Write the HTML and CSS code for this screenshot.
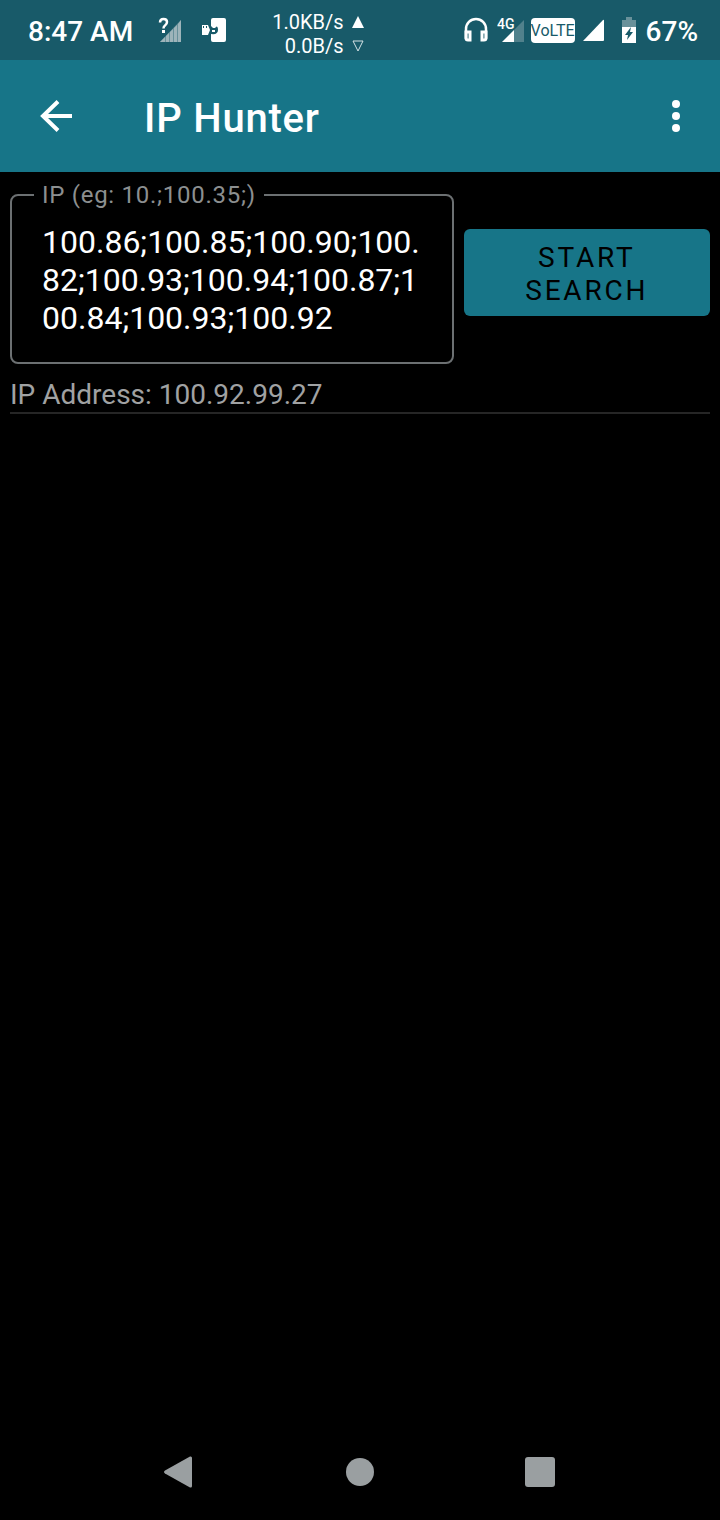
FILE: index.html
```html
<!DOCTYPE html>
<html lang="en">
<head>
    <meta charset="UTF-8">
    <meta name="viewport" content="width=device-width, initial-scale=1.0">
    <title>IP Hunter</title>
    <link rel="stylesheet" href="styles.css">
</head>
<body>
    <!-- Status bar -->
    <div class="status-bar">
        <span class="status-text">8:47 AM</span>
        <svg class="no-sim" width="24" height="28" viewBox="0 0 24 28" aria-hidden="true">
            <path d="M2 26L7 21V26Z M8 20L11 17V26H8Z M12 16L15 13V26H12Z M16 12L19 9V26H16Z M20 8L23 4V26H20Z" fill="#9db4ba"/>
            <path d="M2 26L23 4V26Z" fill="#9db4ba" opacity="0.6"/>
            <path d="M2 6.500Q2 3 5.500 3Q9 3 9 6Q9 8 7 9.500Q5.500 10.500 5.500 12.500" fill="none" stroke="#fff" stroke-width="2.500"/>
            <rect x="4" y="14" width="3" height="3" fill="#fff"/>
        </svg>
        <svg class="app-icon" width="24" height="24" viewBox="0 0 24 24" aria-hidden="true">
            <path d="M11 0H22Q24 0 24 2V22Q24 24 22 24H11Q9 24 9 22V16Q16 17 16 12Q16 8.500 14.500 8.500L13 10H11L9 8V2Q9 0 11 0Z" fill="#fff"/>
            <path d="M0 7H6L8 12L6 17H0Z" fill="#fff"/>
            <path d="M1 9H2M4 9H5" stroke="#185a69" stroke-width="2"/>
            <path d="M10 13H13" stroke="#fff" stroke-width="2"/>
        </svg>
        <div class="speed">
            <span>1.0KB/s</span>
            <svg width="12" height="12" viewBox="0 0 12 12" aria-hidden="true"><path d="M6 0L12 12H0Z" fill="#fff"/></svg>
            <span>0.0B/s</span>
            <svg width="12" height="12" viewBox="0 0 12 12" aria-hidden="true"><path d="M1 1H11L6 11Z" fill="none" stroke="#d5e2e5"/></svg>
        </div>
        <div class="status-right">
            <svg width="24" height="26" viewBox="0 0 24 26" aria-hidden="true">
                <path d="M2 22V12A10 10 0 0 1 22 12V22" fill="none" stroke="#fff" stroke-width="2.500"/>
                <path d="M2 15H6V23H4Q2 23 2 21ZM18 15H22V21Q22 23 20 23H18Z" fill="none" stroke="#fff" stroke-width="3"/>
            </svg>
            <svg class="mobile-data" width="28" height="28" viewBox="0 0 28 28" role="img" aria-label="4G signal">
                <path d="M17 26V14L27 4V26Z" fill="#51818c"/>
                <path d="M5 26L17 14V26Z" fill="#fff"/>
                <text class="network-type" x="0" y="13">4G</text>
            </svg>
            <span class="volte">VoLTE</span>
            <svg class="signal" width="22" height="24" viewBox="0 0 22 24" aria-hidden="true"><path d="M1 23L21 2Q22 1 22 3V22Q22 23 21 23Z" fill="#fff"/></svg>
            <svg class="battery" width="14" height="26" viewBox="0 0 14 26" aria-hidden="true">
                <path d="M4 0H10V3H14V10H0V3H4Z" fill="#69919a"/>
                <path d="M0 10H14V26H0Z" fill="#fff"/>
                <path d="M9 10L3 18H6L5 23L11 15H8Z" fill="#185a69"/>
            </svg>
            <span class="status-text">67%</span>
        </div>
    </div>

    <!-- App bar -->
    <header class="app-bar">
        <button class="icon-btn" aria-label="Back">
            <svg width="32" height="32" viewBox="0 0 32 32"><path d="M18 1.500L3 16L18 30.500M3 16H32" fill="none" stroke="#fff" stroke-width="4"/></svg>
        </button>
        <h1>IP Hunter</h1>
        <button class="icon-btn more-btn" aria-label="More options">
            <svg width="8" height="32" viewBox="0 0 8 32" fill="#fff"><circle cx="4" cy="4" r="4"/><circle cx="4" cy="16" r="4"/><circle cx="4" cy="28" r="4"/></svg>
        </button>
    </header>

    <main>
        <form class="search-form">
            <fieldset class="ip-field">
                <legend><label for="ip-list">IP (eg: 10.;100.35;)</label></legend>
                <textarea id="ip-list" rows="3" spellcheck="false">100.86;100.85;100.90;100.82;100.93;100.94;100.87;100.84;100.93;100.92</textarea>
            </fieldset>
            <button type="button" class="start-btn">START SEARCH</button>
        </form>
        <p class="ip-address">IP Address: 100.92.99.27</p>
    </main>

    <!-- Navigation buttons -->
    <nav class="nav-bar">
        <button class="icon-btn" aria-label="Back">
            <svg width="32" height="32" viewBox="0 0 32 32"><path d="M1 14.500L26 0.500Q28 0 28 2V30Q28 32 26 31.500L1 17.500Q-1 16 1 14.500Z" fill="#9a9fa1"/></svg>
        </button>
        <button class="icon-btn" aria-label="Home">
            <svg width="28" height="28" viewBox="0 0 28 28"><circle cx="14" cy="14" r="14" fill="#9a9fa1"/></svg>
        </button>
        <button class="icon-btn" aria-label="Recent apps">
            <svg width="30" height="30" viewBox="0 0 30 30"><rect width="30" height="30" rx="3" fill="#9a9fa1"/></svg>
        </button>
    </nav>
</body>
</html>
```
FILE: styles.css
```css
* {
    box-sizing: border-box;
}

body {
    margin: 0;
    min-height: 100vh;
    display: flex;
    flex-direction: column;
    background-color: #000;
    color: #fff;
    font-family: Roboto, sans-serif;
}

svg {
    display: block;
    flex-shrink: 0;
}

button {
    font-family: inherit;
    border: none;
    cursor: pointer;
}

/* Status bar */
.status-bar {
    display: flex;
    align-items: center;
    height: 60px;
    padding: 0 22px 0 28px;
    background-color: #185a69;
}

.status-text {
    font-size: 28px;
    font-weight: 500;
    line-height: 32px;
    padding-top: 4px;
}

.no-sim {
    margin-left: 25px;
}

.app-icon {
    margin-left: 20px;
}

.speed {
    display: grid;
    grid-template-columns: auto 12px;
    column-gap: 9px;
    align-items: center;
    justify-items: end;
    margin-left: 46px;
    padding-top: 8px;
    font-size: 20px;
    line-height: 24px;
}

.status-right {
    display: flex;
    align-items: center;
    margin-left: auto;
}

.mobile-data {
    margin-left: 9px;
}

.network-type {
    fill: #fff;
    font-size: 14px;
    font-weight: 500;
}

.volte {
    margin-left: 6px;
    width: 44px;
    border-radius: 4px;
    background-color: #fff;
    color: #185a69;
    font-size: 16px;
    line-height: 25px;
    text-align: center;
}

.signal {
    margin-left: 7px;
}

.battery {
    margin: 0 10px 0 18px;
}

/* App bar */
.app-bar {
    display: flex;
    align-items: center;
    height: 112px;
    padding: 0 16px;
    background-color: #177588;
}

.icon-btn {
    display: flex;
    align-items: center;
    justify-content: center;
    height: 80px;
    min-width: 56px;
    padding: 0;
    background: none;
}

.app-bar .icon-btn {
    width: 80px;
}

.app-bar .more-btn {
    width: 56px;
    margin-left: auto;
}

h1 {
    margin: 0 0 0 48px;
    padding-top: 6px;
    font-size: 40px;
    font-weight: 500;
    letter-spacing: 0.02em;
    line-height: 48px;
}

/* Search form */
main {
    flex: 1;
    padding: 9px 10px;
}

.search-form {
    display: grid;
    grid-template-columns: 9fr 5fr;
    column-gap: 10px;
    align-items: center;
}

.ip-field {
    min-width: 0;
    margin: 0;
    padding: 14px 30px 25px 22px;
    border: 2px solid #6c7072;
    border-radius: 8px;
}

.ip-field legend {
    padding: 0 8px;
    color: #8c8f90;
    font-size: 24px;
    letter-spacing: 0.03em;
    line-height: 28px;
}

.ip-field textarea {
    display: block;
    width: 100%;
    height: 114px;
    padding: 0 0 0 8px;
    border: none;
    outline: none;
    resize: none;
    overflow: hidden;
    background: none;
    color: #fff;
    font-family: inherit;
    font-size: 32px;
    line-height: 38px;
    word-break: break-all;
}

.start-btn {
    padding: 12px 56px 9px;
    border-radius: 6px;
    background-color: #177588;
    color: #000;
    font-size: 28px;
    letter-spacing: 0.1em;
    line-height: 33px;
}

.ip-address {
    margin: 14px 0 0;
    border-bottom: 2px solid #262626;
    color: #a0a2a3;
    font-size: 28px;
    line-height: 34px;
}

/* Navigation buttons */
.nav-bar {
    display: grid;
    grid-template-columns: repeat(3, 1fr);
    align-items: center;
    justify-items: center;
    height: 96px;
    padding: 0 12.5%;
}
```
